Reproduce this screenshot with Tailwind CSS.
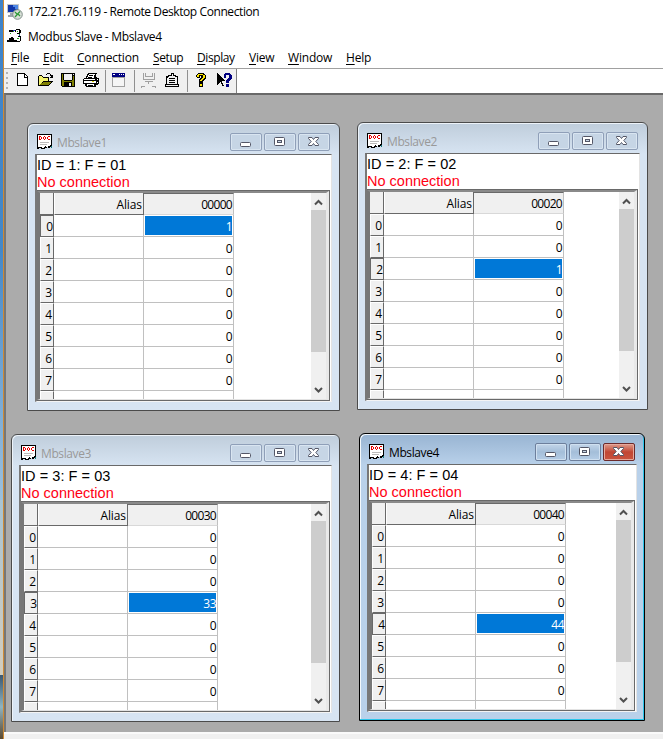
<!DOCTYPE html>
<html lang="en">
<head>
<meta charset="utf-8">
<title>Modbus Slave</title>
<script src="https://cdn.jsdelivr.net/npm/@tailwindcss/browser@4"></script>
</head>
<body class="w-[663px] h-[739px] overflow-hidden flex bg-white text-black text-[12px] leading-[16px] font-['Open_Sans','Noto_Sans',sans-serif]">
  <!-- Desktop edge -->
  <div class="w-[4px] shrink-0 h-full flex flex-col border-r border-[#d08a32]">
    <div class="h-[500px] bg-linear-to-b from-[#3f83c9] via-[#4488c8] to-[#9cc0dc]"></div>
    <div class="h-[175px] bg-linear-to-b from-[#a9c4d2] to-[#d3cdbd]"></div>
    <div class="grow bg-linear-to-b from-[#3c5870] via-[#8fb4c0] to-[#59482f]"></div>
  </div>
  <main class="grow flex flex-col min-w-0">
    <header class="h-6 flex items-center pl-[3px]">
      <svg class="w-4 h-4" viewBox="0 0 16 16" shape-rendering="crispEdges">
        <rect x="0" y="0" width="12" height="9" fill="#c4c8cc"/><rect x="1" y="1" width="10" height="7" fill="#1136a8"/><path d="M6 1h5v4H8V3H6z" fill="#4e87e5"/><path d="M3 9h5v2H3zM1 11h8v2H1z" fill="#9da5ad"/>
        <g shape-rendering="auto"><circle cx="10.5" cy="10.5" r="4.8" fill="#d9ded9" stroke="#81908a"/><path d="M8 8l2.3 2.4L8 13M13 7.500l-2.2 2.3L13 12" fill="none" stroke="#2e9a36" stroke-width="1.3"/></g>
      </svg>
      <h1 class="pl-[5px] tracking-[-0.41px]">172.21.76.119 - Remote Desktop Connection</h1>
    </header>
    <div class="h-[25px] flex items-center pl-[3px]">
      <svg class="w-4 h-4 -mt-[2px]" viewBox="0 0 16 16" shape-rendering="crispEdges">
        <path d="M2 2h4v2H2zM9 1h4v1H9zM8 2h1v2H8zM12 2h2v3h-2zM10 5h3v1h-3zM11 8h3v1h-3zM13 9h1v4h-1zM10 13h3v1h-3zM0 12h10v2H0zM2 10h5v2H2zM4 9h2v1H4z" fill="#000"/><path d="M3 5h1v1H3zM6 3h1v1H6zM10 3h1v1h-1zM12 6h1v1h-1zM10 10h2v1h-2z" fill="#18a018"/><path d="M6 2h2v1H6zM12 7h1v1h-1z" fill="#2330cb"/>
      </svg>
      <h2 class="pl-[5px] tracking-[-0.32px]">Modbus Slave - Mbslave4</h2>
    </div>
    <nav class="h-[18px] flex items-center pl-[7px] tracking-[-0.2px] whitespace-nowrap [&_u]:underline-offset-2">
      <span class="w-8"><u>F</u>ile</span><span class="w-[34px]"><u>E</u>dit</span><span class="w-[76px]"><u>C</u>onnection</span><span class="w-11 tracking-[-0.4px]"><u>S</u>etup</span><span class="w-[52px] tracking-[-0.4px]"><u>D</u>isplay</span><span class="w-[39px]"><u>V</u>iew</span><span class="w-[58px]"><u>W</u>indow</span><span><u>H</u>elp</span>
    </nav>
    <div class="h-[25px] flex border-t border-[#a0a0a0] mt-[1px]">
      <div class="w-[233px] bg-[#f0f0f0] border-r border-[#808080] flex items-start pt-[1px]">
        <div class="w-[7px] h-[23px] pl-[2px] pt-[2px]"><div class="w-[2px] h-5 bg-[repeating-linear-gradient(180deg,#b4b4b4_0_2px,#f0f0f0_2px_5px)]"></div></div>
        <svg class="w-[23px] h-[23px]" viewBox="0 0 23 23" shape-rendering="crispEdges"><path d="M6 3h8v1h1v1h1v1h1v10H6z" fill="#000"/><path d="M7 4h6v4h3v7H7z" fill="#fff"/><path d="M14 5h1v1h1v1h-2z" fill="#fff"/></svg>
        <svg class="w-[23px] h-[23px]" viewBox="0 0 23 23" shape-rendering="crispEdges"><path d="M12 4h1v-1h3v1h1v1h2v3h-3V7h1V6h-1V4h-3v1h-1zM4 6h1V5h3v1h1v1h6v4h4v1h-1v1h-1v1h-1v1h-1v1H4z" fill="#000"/><path d="M5 6h3v1h1v1h5v3H9v1H8v1H7v1H6v1H5z" fill="#f4f26c"/><path d="M9 12h8v1h-1v1h-1v1H6v-1h1v-1h2z" fill="#808000"/></svg>
        <svg class="w-[23px] h-[23px]" viewBox="0 0 23 23" shape-rendering="crispEdges"><path d="M4 3h14v14H5v-1H4z" fill="#000"/><path d="M5 4h1v6h1v1h8v-1h1V6h1v10h-2v-4H7v4H5z" fill="#808000"/><path d="M7 4h8v6H7zM16 4h1v1h-1zM12 13h2v3h-2z" fill="#f0f0f0"/></svg>
        <svg class="w-[23px] h-[23px]" viewBox="0 0 23 23" shape-rendering="crispEdges"><path d="M8 3h9v1h-1v3h1v1h2v6h-1v1h-2v2H6v-1H5v-2H3V9h1V8h2V6h1V4h1z" fill="#000"/><path d="M9 4h6v1h-1v3H7V7h1V5h1zM5 9h10v1H4V9zM4 11h12v2H4zM7 14h7v2H7zM17 9h1v1h-1zM17 12h1v1h-1z" fill="#fff"/><path d="M9 5h4v1H9zM8 7h4v1H8zM8 15h5v1H8z" fill="#000"/><path d="M12 11h2v1h-2z" fill="#d7d000"/></svg>
        <i class="w-1 h-[22px] flex justify-center"><b class="w-px h-full bg-[#909090]"></b></i>
        <svg class="w-[23px] h-[23px]" viewBox="0 0 23 23" shape-rendering="crispEdges"><path d="M5 3h13v14H5z" fill="#a0a0a0"/><path d="M6 8h11v8H6z" fill="#f5f5f5"/><path d="M5 3h13v4H5z" fill="#000080"/><path d="M6 4h2v1H6zM12 4h1v1h-1zM14 4h1v1h-1zM16 4h1v1h-1z" fill="#fff"/></svg>
        <i class="w-[8px] h-[22px] flex justify-center"><b class="w-px h-full bg-[#909090]"></b></i>
        <svg class="w-[23px] h-[23px]" viewBox="0 0 23 23" shape-rendering="crispEdges"><path d="M5 3h1v7H5zM16 3h1v7h-1zM7 3h1v4H7zM14 3h1v4h-1zM8 6h6v1H8zM6 9h10v1H6zM7 11h8v1H7zM10 12h1v2h-1zM3 16h4v1H3zM3 17h1v1H3zM14 16h4v1h-4zM17 17h1v1h-1z" fill="#a0a0a0"/></svg>
        <svg class="w-[23px] h-[23px]" viewBox="0 0 23 23" shape-rendering="crispEdges"><path d="M10 3h3v2h2v1h2v8h1v3H4v-3h1V6h2V5h3z" fill="#000"/><path d="M11 4h1v2h-1zM8 6h6v1H8zM7 7h9v1H7zM6 8h10v6H6zM5 15h12v1H5z" fill="#f0f0f0"/><path d="M8 8h6v1H8zM8 10h6v1H8zM8 12h6v1H8z" fill="#000"/></svg>
        <i class="w-[6px] h-[22px] flex justify-center"><b class="w-px h-full bg-[#909090]"></b></i>
        <svg class="w-[23px] h-[23px]" viewBox="0 0 23 23" shape-rendering="crispEdges"><path d="M8 3h6v1h1v1h1v4h-1v1h-1v1h-1v2H9V9h1V8h1V6h-1v2H7V7H6V5h1V4h1zM9 13h4v4H9z" fill="#000"/><path d="M8 4h5v1h2v3h-1v1h-1v1h-1v1h-2v-1h1V9h1V8h1V5H9v2H7V5h1zM10 14h2v2h-2z" fill="#ffe800"/></svg>
        <svg class="w-[23px] h-[23px]" viewBox="0 0 23 23" shape-rendering="crispEdges"><path d="M4 3h1v1h1v1h1v1h1v1h1v1h1v1h1v1h1v1h-3v2h1v2h1v1H9v-2H8v-2H7v1H6v1H5v1H4z" fill="#000"/><path d="M12 3h5v1h1v1h1v4h-1v1h-1v1h-1v2h-3v-3h1V9h1V8h1V5h-3v3h-2V4h1zM13 14h3v3h-3z" fill="#000080"/></svg>
      </div>
    </div>
    <!-- MDI client area -->
    <section id="mdi" class="relative h-[639px] w-full bg-[#ababab] border-t-2 border-l-2 border-t-[#696969] border-l-[#777777] overflow-hidden"></section>
    <footer class="grow border-t-2 border-[#fafafa] bg-[#f0f0f0]"></footer>
  </main>
<script>
const windows = [
  {n:1, place:"left-[21px] top-[28px] w-[313px]", addr:"00000", sel:0, val:1},
  {n:2, place:"left-[351px] top-[27px] w-[291px]", addr:"00020", sel:2, val:1},
  {n:3, place:"left-[5px] top-[339px] w-[329px]", addr:"00030", sel:3, val:33},
  {n:4, place:"left-[353px] top-[338px] w-[286px]", addr:"00040", sel:4, val:44, active:true},
];
const docIcon = `<svg class="w-4 h-4" viewBox="0 0 16 16" shape-rendering="crispEdges"><path d="M0 0h15v12h-1v1h-1v1h-2v-1h-1v1H8v1H4v-1H2v1H0z" fill="#000"/><path d="M1 1h13v10h-1v1h-2v1H9v-1H8v1H7v1H5v-1H1z" fill="#fff"/><path d="M2 2h2v1H3v2h1v1H2zM4 3h1v2H4zM6 3h1v2H6zM7 2h1v1H7zM8 3h1v2H8zM7 5h1v1H7zM10 3h1v2h-1zM11 2h2v1h-2zM11 5h2v1h-2z" fill="#e80000"/><path d="M3 8h9v1H3zM3 10h7v1H3z" fill="#bbb"/><path d="M14 12h1v2h-1z" fill="#167b7b"/></svg>`;
const glyphs = [
  `<rect x="9.5" y="8.500" width="10" height="4" rx="1" fill="#fff" stroke="#535666"/>`,
  `<rect x="9.5" y="3.500" width="10" height="8" rx="1" fill="#fff" stroke="#535666"/><rect x="12.5" y="6.500" width="4" height="2" fill="#c8d6e5" stroke="#535666"/>`,
  `<path d="M9.500 3.500h3.500l1.500 2 1.500-2h3.500v1l-2.700 3 2.700 3v1H16l-1.500-2-1.500 2h-3.500v-1l2.700-3-2.700-3z" fill="#fff" stroke="#535666"/>`,
];
function row(i, w) {
  const s = i === w.sel;
  return `<div class="flex h-[22px] shrink-0">
    <div class="w-[14px] bg-[#f0f0f0] border-r border-b border-[#696969] text-right pt-[3px] ${s ? "border-l border-t" : "border-l border-t border-l-white border-t-white pr-px"}">${i < 8 ? i : ""}</div>
    <div class="w-[90px] border-r border-b border-[#c0c0c0]"></div>
    <div class="w-[90px] border-r border-b border-[#c0c0c0] p-px"><div class="h-[19px] text-right pt-[3px] leading-[16px] tracking-[-0.5px] ${s ? "bg-[#0078d7] text-white" : ""}">${i < 8 ? (s ? w.val : 0) : ""}</div></div>
  </div>`;
}
document.getElementById("mdi").innerHTML = windows.map(w => `
<article class="absolute ${w.place} h-[288px] flex flex-col border rounded-t-[6px] px-[7px] pb-[8px] ${w.active ? "border-black bg-[#b9d1ea] bg-linear-to-b from-[#98b4d2] to-[#b9d1ea] to-[31px] shadow-[inset_-1px_-1px_0_#2cc5ea,inset_1px_1px_0_#f3f8fc]" : "border-[#4b4b4b] bg-[#d7e4f2] bg-linear-to-b from-[#bfcddb] to-[#d7e4f2] to-[31px] shadow-[inset_1px_1px_0_#edf3f9]"}">
  <div class="h-[30px] shrink-0 flex items-start pl-[2px] pr-[2px]">
    <div class="pt-[10px]">${docIcon}</div>
    <h3 class="grow pl-[4px] pt-[11px] tracking-[-0.4px] ${w.active ? "text-black" : "text-[#999999]"}">Mbslave${w.n}</h3>
    <div class="flex gap-[2px] pt-[9px]">${glyphs.map((g, i) => `<button class="w-8 h-[18px] border rounded-[2px] ${w.active ? (i === 2 ? "border-[#6b2a2c] bg-linear-to-b from-[#dc9a8c] via-[#c14634] to-[#c95440] shadow-[inset_0_0_0_1px_#e6a99d]" : "border-[#6d7f9c] bg-linear-to-b from-[#c3d5e9] via-[#a4bed9] to-[#b5cde6] shadow-[inset_0_0_0_1px_#d0e0f0]") : "border-[#8f9fb8] bg-[#c6d5e5] shadow-[inset_0_0_0_1px_#d9e5f1]"}"><svg class="w-[30px] h-4" viewBox="0 0 30 16">${g}</svg></button>`).join("")}</div>
  </div>
  <div class="grow min-h-0 flex flex-col bg-white border-t border-l-2 border-r border-b border-t-[#696969] border-l-[#787878] border-r-[#e3e3e3] border-b-[#f4f4f4]">
    <div class="h-[35px] shrink-0 pt-[2px] font-['Liberation_Sans',sans-serif] text-[14.500px] leading-[17px] whitespace-nowrap">
      <p class="tracking-[0.05px]">ID = ${w.n}: F = 0${w.n}</p>
      <p class="text-[#ff0014]">No connection</p>
    </div>
    <div class="grow min-h-0 mr-px border-t border-r border-b border-[#696969]">
      <div class="h-full border-t-2 border-l-[3px] border-t-[#8a8a8a] border-l-[#777777] border-r-[3px] border-r-[#e9e9e9] border-b border-b-[#e3e3e3] flex">
        <div class="grow overflow-hidden flex flex-col">
          <div class="flex h-[22px] shrink-0 text-right">
            <div class="w-[14px] bg-[#f0f0f0] border-r border-b border-[#696969]"></div>
            <div class="w-[90px] bg-[#f0f0f0] border-r border-b border-[#696969] border-l border-l-white pr-px pt-[4px] tracking-[-0.1px]">Alias</div>
            <div class="w-[90px] bg-[#f0f0f0] border-t border-r border-b border-t-[#696969] border-r-[#c0c0c0] border-b-[#d8d8d8] pt-[3px] pr-px tracking-[-0.7px]">${w.addr}</div>
          </div>
          ${[0,1,2,3,4,5,6,7,8].map(i => row(i, w)).join("")}
        </div>
        <div class="w-[15px] shrink-0 bg-[#f0f0f0] flex flex-col items-center">
          <svg class="w-[15px] h-[17px] shrink-0" viewBox="0 0 15 17"><path d="M4 11.500l3.500-3.500 3.500 3.500" fill="none" stroke="#505050" stroke-width="2"/></svg>
          <div class="w-full h-[142px] shrink-0 bg-[#cdcdcd]"></div>
          <svg class="w-[15px] h-[17px] shrink-0 mt-auto" viewBox="0 0 15 17"><path d="M4 6l3.500 3.500 3.500-3.500" fill="none" stroke="#505050" stroke-width="2"/></svg>
        </div>
      </div>
    </div>
  </div>
</article>`).join("");
</script>
</body>
</html>
